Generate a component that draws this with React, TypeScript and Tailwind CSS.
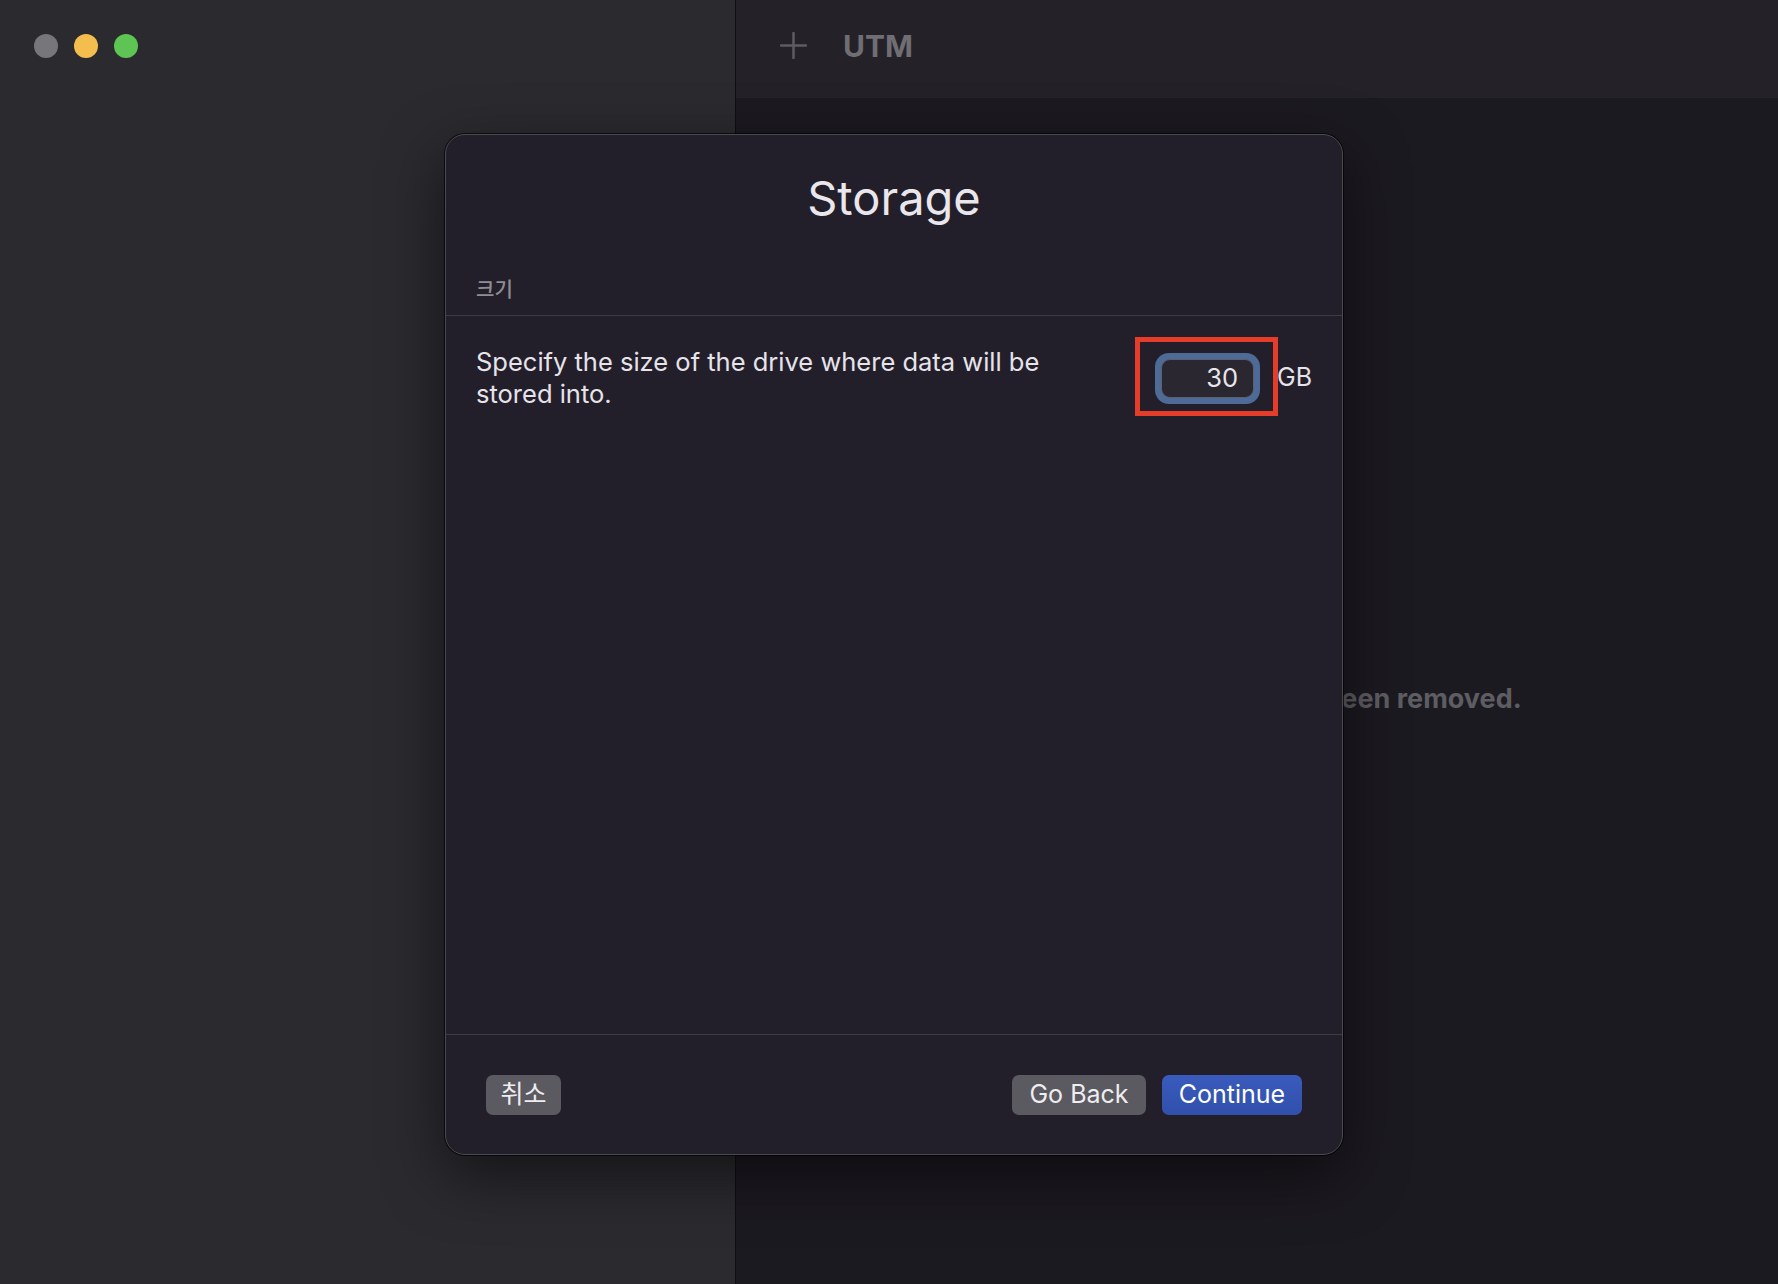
import React from 'react';

const FONT = 'font-["Inter","Noto_Sans_CJK_KR",sans-serif]';

function TrafficLights() {
  return (
    <div className="flex items-center gap-[16px] pl-[34px] pt-[34px]">
      <div className="w-[24px] h-[24px] rounded-full bg-[#77767b]" />
      <div className="w-[24px] h-[24px] rounded-full bg-[#f4be4f]" />
      <div className="w-[24px] h-[24px] rounded-full bg-[#5ec453]" />
    </div>
  );
}

function PlusIcon() {
  return (
    <svg width="27" height="27" viewBox="0 0 27 27" fill="none">
      <line x1="13.5" y1="1" x2="13.5" y2="26" stroke="#5d5c62" strokeWidth="2.5" strokeLinecap="round" />
      <line x1="1" y1="13.5" x2="26" y2="13.5" stroke="#5d5c62" strokeWidth="2.5" strokeLinecap="round" />
    </svg>
  );
}

export default function App() {
  return (
    <div className={`relative flex w-[1778px] h-[1284px] overflow-hidden ${FONT}`}>
      {/* Sidebar */}
      <div className="w-[736px] h-full bg-[#2b2a2f] border-r border-[#0f0e12] shrink-0">
        <TrafficLights />
      </div>

      {/* Main */}
      <div className="flex-1 flex flex-col">
        <div className="h-[98px] bg-[#242228] flex items-start pt-[32px] pl-[44px]">
          <div className="flex items-center gap-[36px] h-[27px]">
            <PlusIcon />
            <span className="text-[30px] font-bold text-[#6f6e73] leading-none">UTM</span>
          </div>
        </div>
        <div className="flex-1 bg-[#1c1a21] flex items-center justify-center pt-[16px] pl-[10px]">
          <span className="text-[27px] font-bold text-[#5e5d62]">The virtual machine has been removed.</span>
        </div>
      </div>

      {/* Sheet */}
      <div className="absolute left-[445px] top-[134px] w-[898px] h-[1021px] flex flex-col bg-[#231f2a] rounded-[20px] border border-[#4b4952] shadow-[0_0_0_1px_rgba(0,0,0,0.7),0_20px_60px_rgba(0,0,0,0.55)]">
        <div className="pt-[39px] border-b border-[#3d3b43]">
          <h1 className="text-center text-[47px] leading-none text-[#e9e7ec] font-normal">Storage</h1>
          <div className="mt-[56px] pl-[30px] pb-[12px] text-[20px] leading-[26px] font-medium text-[#8f8d94]">크기</div>
        </div>

        <div className="flex items-center justify-between pl-[30px] pr-[30px] pt-[30px]">
          <p className="w-[640px] text-[25.5px] leading-[32px] text-[#e6e4ea]">
            Specify the size of the drive where data will be stored into.
          </p>
          <div className="flex items-center gap-[17px]">
            <div className="relative">
              <div className="w-[105px] h-[51px] rounded-[14px] bg-[#4e6b98] p-[6px]">
                <div className="w-full h-full rounded-[9px] bg-[#2a2731] border border-[#5a5f72] flex items-center justify-end pr-[15px] text-[25.5px] text-[#e8e6ec]">
                  30
                </div>
              </div>
              <div className="absolute -left-[20px] -top-[16px] -right-[18px] -bottom-[12px] border-[5px] border-[#e63c2a]" />
            </div>
            <span className="text-[25px] text-[#e6e4ea]">GB</span>
          </div>
        </div>

        <div className="flex-1" />

        <div className="h-[120px] border-t border-[#3d3b43] flex items-center justify-between px-[40px]">
          <button className="w-[75px] h-[40px] rounded-[7px] bg-[#5c5a61] text-[25px] text-[#eeedf0] leading-none">
            취소
          </button>
          <div className="flex items-center gap-[16px]">
            <button className="w-[134px] h-[40px] rounded-[7px] bg-[#5c5a61] text-[25px] text-[#eeedf0] leading-none">
              Go Back
            </button>
            <button className="w-[140px] h-[40px] rounded-[7px] bg-gradient-to-b from-[#3a5bbd] to-[#3150ac] text-[25px] text-white leading-none">
              Continue
            </button>
          </div>
        </div>
      </div>
    </div>
  );
}
